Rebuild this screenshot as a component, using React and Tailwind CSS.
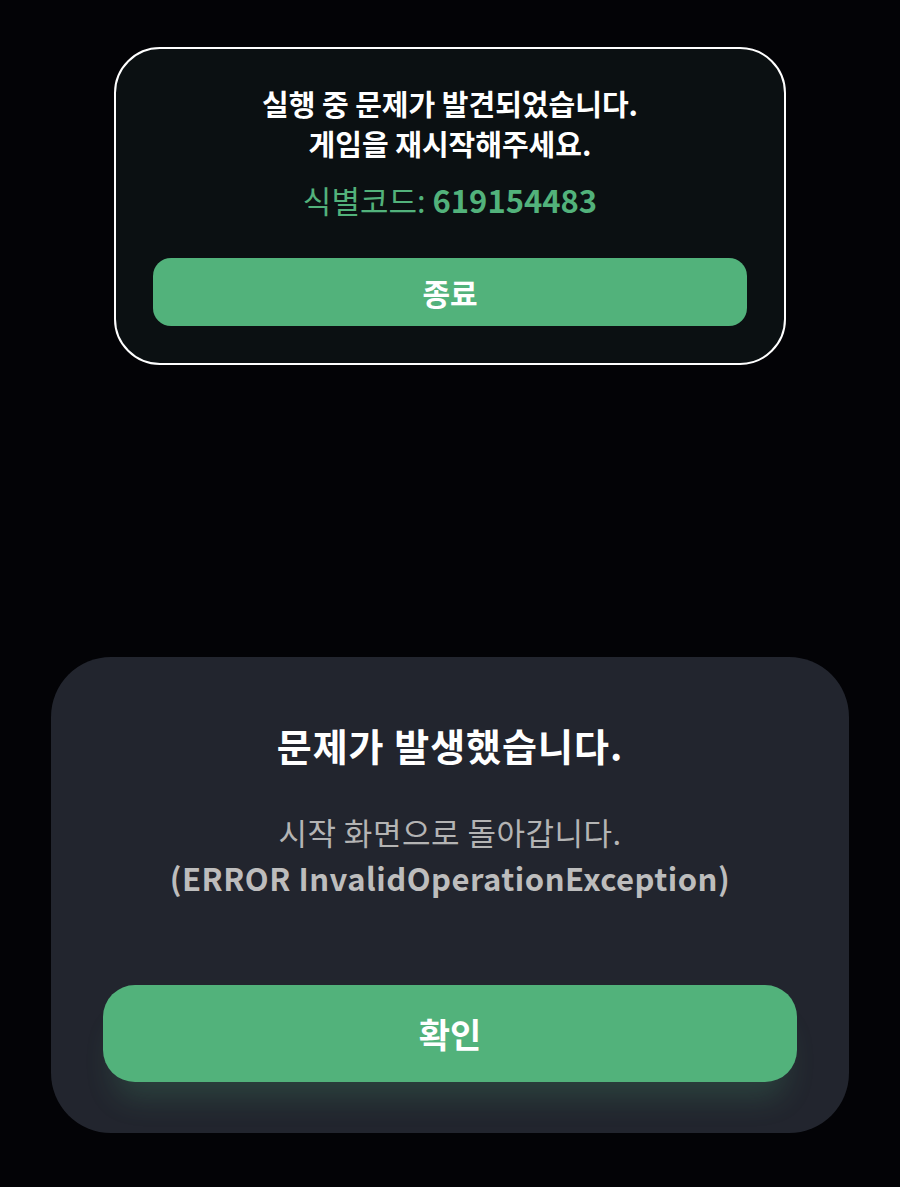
// Two stacked error dialogs on a black screen
const FONT = { fontFamily: '"Noto Sans CJK KR", "Noto Sans", sans-serif' };

const App = () => {
  return (
    <div className="min-h-[1187px] w-full bg-[#030306] flex flex-col items-center" style={FONT}>

      {/* ── Runtime error card ─────────────────────────────────────── */}
      <div className="mt-[47px] w-[672px] h-[318px] rounded-[46px] border-[2.5px] border-white bg-[#0b1012] flex flex-col items-center px-[37px] pt-[34px]">
        <p className="text-[29px] leading-[40px] font-bold text-white text-center">
          실행 중 문제가 발견되었습니다.
          <br />
          게임을 재시작해주세요.
        </p>
        <p className="mt-[17px] text-[31px] leading-[40px] text-[#52b27b]">
          식별코드: <span className="font-bold">619154483</span>
        </p>
        <button className="mt-[38px] w-full h-[68px] rounded-[18px] bg-[#52b27b] text-white text-[30px] font-bold">
          종료
        </button>
      </div>

      {/* ── Generic error dialog ───────────────────────────────────── */}
      <div className="mt-[292px] w-[798px] h-[476px] rounded-[60px] bg-[#22252e] flex flex-col items-center px-[52px] pt-[66px]">
        <h2 className="text-[38px] leading-[44px] font-bold text-white tracking-[1px]">
          문제가 발생했습니다.
        </h2>
        <p className="mt-[42px] text-[31px] leading-[46px] text-[#b4b4b4] text-center tracking-[0.5px]">
          시작 화면으로 돌아갑니다.
          <br />
          <span className="font-bold text-[#bdbdbd]">(ERROR InvalidOperationException)</span>
        </p>
        <button className="mt-[84px] w-full h-[97px] rounded-[32px] bg-[#52b27b] text-white text-[34px] font-bold shadow-[0_28px_30px_-12px_rgba(82,178,123,0.2)]">
          확인
        </button>
      </div>
    </div>
  );
};

export default App;
